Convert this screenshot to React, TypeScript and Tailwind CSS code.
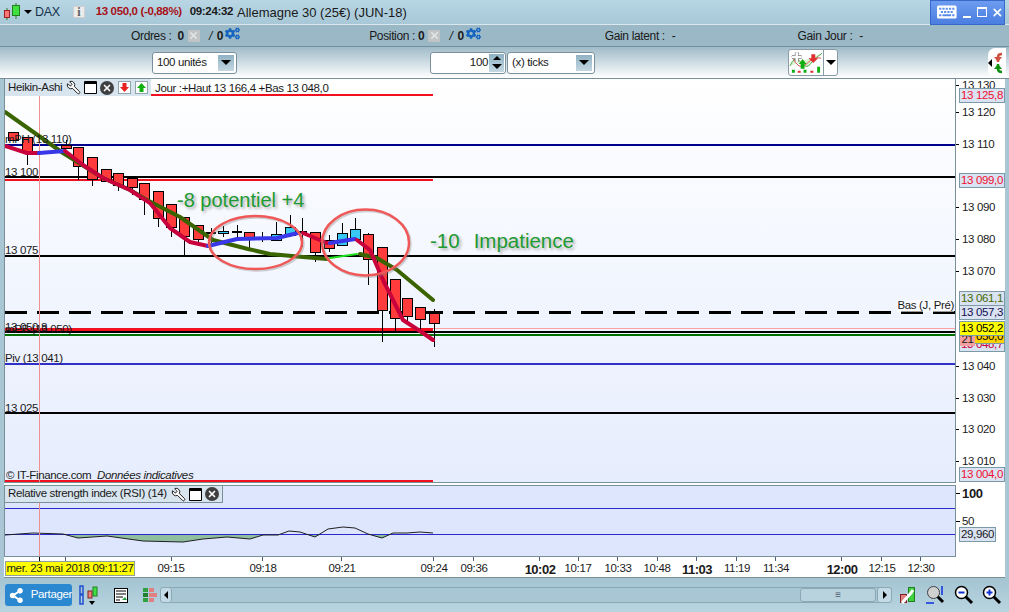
import React from 'react';
import { FaCogs, FaKeyboard, FaShareAlt } from 'react-icons/fa';
import { Wrench, X } from 'lucide-react';

// [x, bodyTop, bodyBottom, wickTop, wickBottom, colour] in page pixels
type Candle = [number, number, number, number, number, 'r' | 'b' | 'd'];

const candles: Candle[] = [
  [8, 132, 140, 132, 140, 'r'],
  [22, 137, 151, 137, 165, 'r'],
  [61, 145, 148, 140, 148, 'r'],
  [73, 147, 166, 147, 180, 'r'],
  [87, 157, 179, 157, 186, 'r'],
  [101, 169, 181, 169, 181, 'r'],
  [113, 173, 185, 173, 191, 'r'],
  [127, 178, 187, 178, 195, 'r'],
  [139, 183, 199, 183, 215, 'r'],
  [153, 191, 218, 191, 227, 'r'],
  [166, 204, 227, 204, 237, 'r'],
  [179, 217, 236, 217, 255, 'r'],
  [193, 225, 239, 225, 246, 'r'],
  [206, 232, 232, 228, 244, 'd'],
  [218, 231, 233, 226, 237, 'b'],
  [232, 231, 231, 225, 237, 'd'],
  [244, 232, 239, 232, 248, 'r'],
  [257, 237, 237, 232, 242, 'd'],
  [271, 234, 240, 222, 240, 'b'],
  [285, 227, 235, 215, 237, 'b'],
  [297, 231, 231, 218, 247, 'd'],
  [310, 232, 252, 232, 262, 'r'],
  [324, 240, 248, 235, 252, 'r'],
  [337, 233, 245, 223, 245, 'b'],
  [350, 229, 239, 218, 239, 'b'],
  [363, 234, 259, 233, 285, 'r'],
  [377, 247, 310, 247, 342, 'r'],
  [390, 279, 318, 279, 333, 'r'],
  [402, 298, 316, 298, 325, 'r'],
  [415, 307, 319, 307, 330, 'r'],
  [429, 313, 323, 309, 347, 'r'],
];

const axisTicks = [
  ['13 130', 86], ['13 120', 113], ['13 110', 145], ['13 090', 208], ['13 080', 240],
  ['13 070', 272], ['13 040', 367], ['13 030', 399], ['13 020', 430], ['13 010', 462],
] as const;

const axisTags = [
  { text: '13 125,8', y: 95, cls: 'bg-[#dbe2f2] text-[#f01030]' },
  { text: '13 099,0', y: 180, cls: 'bg-[#dbe2f2] text-[#f01030]' },
  { text: '13 061,1', y: 298, cls: 'bg-[#dbe2f2] text-[#3f6a00]' },
  { text: '13 057,3', y: 312, cls: 'bg-[#dbe2f2] text-[#101050]' },
  { text: '13 048,7', y: 344, cls: 'bg-[#dbe2f2] text-[#c8003c]' },
  { text: '13 050,0', y: 336, cls: 'bg-[#ffd000] text-black' },
  { text: '13 004,0', y: 474, cls: 'bg-[#dbe2f2] text-[#f01030]' },
];

const timeLabels = [
  ['09:15', 171, false], ['09:18', 263, false], ['09:21', 342, false], ['09:24', 434, false], ['09:36', 474, false],
  ['10:02', 540, true], ['10:17', 578, false], ['10:33', 618, false], ['10:48', 657, false], ['11:03', 697, true],
  ['11:19', 737, false], ['11:34', 776, false], ['12:00', 842, true], ['12:15', 882, false], ['12:30', 921, false],
] as const;

const timeTicks = [65, 171, 262, 341, 433, 473, 539, 578, 617, 657, 696, 736, 775, 841, 881, 920];

function CandleIcon() {
  return (
    <svg width="18" height="20" viewBox="0 0 18 20">
      <path d="M4 6v12M13 1v16" stroke="#2c7a2c" />
      <rect x="1.5" y="8.5" width="5" height="7" fill="#f87878" stroke="#a02020" />
      <rect x="9.5" y="3.5" width="7" height="10" fill="#40e040" stroke="#208020" />
    </svg>
  );
}

function Caret({ size = 'big' }: { size?: 'big' | 'small' }) {
  return size === 'big' ? (
    <span className="block h-0 w-0 border-x-[5px] border-t-[5px] border-x-transparent border-t-black" />
  ) : (
    <span className="block h-0 w-0 border-x-[4px] border-b-[4px] border-x-transparent border-b-black" />
  );
}

function DropBtn() {
  return (
    <span className="flex h-[16px] w-[16px] items-center justify-center bg-gradient-to-b from-[#8fb2c4] to-[#c4d8e2]">
      <Caret />
    </span>
  );
}

function XBox() {
  return (
    <span className="flex h-[12px] w-[12px] items-center justify-center bg-[#c0c4c4]">
      <X size={11} strokeWidth={3.5} className="text-[#e4e4e4]" />
    </span>
  );
}

function PaneIcons() {
  return (
    <>
      <Wrench size={15} className="-scale-x-100 fill-white text-black" strokeWidth={1.4} />
      <span className="h-[13px] w-[13px] rounded-[1px] border border-black border-t-[3px] bg-white" />
      <span className="flex h-[14px] w-[14px] items-center justify-center rounded-full bg-[#404040]">
        <X size={10} strokeWidth={4} className="text-white" />
      </span>
    </>
  );
}

function ArrowBox({ up }: { up?: boolean }) {
  return (
    <svg width="13" height="13" viewBox="0 0 13 13" className="ml-[1px]">
      <rect x="0.5" y="0.5" width="12" height="12" fill="white" stroke="#90a4ae" />
      {up ? <path d="M6.5 2l4.5 5H8.5v4h-4V7H2z" fill="#10b010" /> : <path d="M4.5 2h4v4H11l-4.5 5L2 6h2.5z" fill="#e82020" />}
    </svg>
  );
}

function ZoomIcon({ sign }: { sign: '+' | '-' }) {
  return (
    <svg width="20" height="20" viewBox="0 0 20 20">
      <path d="M11 11l7 7" stroke="black" strokeWidth="3" />
      <circle cx="7.5" cy="7.5" r="6" fill="white" stroke="black" strokeWidth="1.5" />
      <path d="M4.5 7.5h6" stroke="#1030d0" strokeWidth="2" />
      {sign === '+' && <path d="M7.5 4.5v6" stroke="#1030d0" strokeWidth="2" />}
    </svg>
  );
}

function TradeCount({ label, left, gap }: { label: string; left: string; gap: string }) {
  return (
    <div className={`flex items-center ${left}`}>
      <span>{label}</span>
      <b className={gap}>0</b>
      <span className="ml-[4px]"><XBox /></span>
      <span className="ml-[9px] italic">/</span>
      <b className="ml-[5px]">0</b>
      <FaCogs size={15} className="ml-[2px] -mt-1 text-[#1565c0]" />
    </div>
  );
}

function PriceChart() {
  return (
    <svg className="absolute inset-0 h-full w-full" viewBox="5 79 950 403">
      <g shapeRendering="crispEdges">
        <path d="M151 95H433" stroke="#f01020" strokeWidth="2" />
        <path d="M5 145H955" stroke="#000090" strokeWidth="2" />
        <path d="M5 177H955" stroke="black" strokeWidth="2" />
        <path d="M5 180H433" stroke="#f01020" strokeWidth="2" />
        <path d="M5 256H955" stroke="black" strokeWidth="2" />
        <path d="M5 312H955" stroke="black" strokeWidth="3" strokeDasharray="22 10" />
        <path d="M433 328H955" stroke="#ffa0a0" strokeWidth="1" />
        <path d="M5 329.5H433" stroke="#f01020" strokeWidth="3" />
        <path d="M5 332H955" stroke="black" strokeWidth="2" />
        <path d="M5 335H955" stroke="#007000" strokeWidth="2" />
        <path d="M5 364H955" stroke="#3030c8" strokeWidth="2" />
        <path d="M5 413H955" stroke="black" strokeWidth="2" />
        <path d="M5 481H433" stroke="#f01020" strokeWidth="2" />
        <path d="M39 79V482" stroke="#f09090" strokeWidth="1" />
      </g>
      <g shapeRendering="crispEdges">
        {candles.map(([x, top, bottom, wTop, wBottom, kind]) => (
          <g key={x}>
            <path d={`M${x + 5}.5 ${wTop}V${wBottom}`} stroke="black" />
            {kind === 'd' ? (
              <path d={`M${x} ${top}.5H${x + 10}`} stroke="black" strokeWidth="2" />
            ) : (
              <rect x={x + 0.5} y={top + 0.5} width="10" height={bottom - top} fill={kind === 'r' ? '#ff3b3b' : '#38c8f4'} stroke="black" />
            )}
          </g>
        ))}
      </g>
      <g fill="none" strokeLinejoin="round" strokeLinecap="round">
        <path d="M5 112L63 153L103 178L130 190L147 200L180 217L213 240L248 249L270 254L303 257L327 259" stroke="#3a6400" strokeWidth="4" />
        <path d="M330 258L357 254" stroke="#20e020" strokeWidth="2" />
        <path d="M360 254L377 258L397 270L433 300" stroke="#3a6400" strokeWidth="4" />
        <path d="M5 146L27 153L39 153" stroke="#c8003c" strokeWidth="4" />
        <path d="M39 153L65 151" stroke="#3838e8" strokeWidth="4" />
        <path d="M65 151L83 165L103 178L130 190L150 203L170 228L190 242L208 246" stroke="#c8003c" strokeWidth="4" />
        <path d="M208 246L237 239L277 238L298 233" stroke="#3838e8" strokeWidth="4" />
        <path d="M303 233L327 243" stroke="#c8003c" strokeWidth="4" />
        <path d="M330 243L355 239" stroke="#3838e8" strokeWidth="4" />
        <path d="M357 240L370 250L383 280L403 320L423 333L433 340" stroke="#c8003c" strokeWidth="4" />
      </g>
      <g fill="none">
        <ellipse cx="257" cy="244" rx="46.5" ry="26.5" stroke="#808080" strokeOpacity="0.35" strokeWidth="2.5" />
        <ellipse cx="367" cy="244" rx="43.5" ry="33" stroke="#808080" strokeOpacity="0.35" strokeWidth="2.5" />
        <ellipse cx="255.5" cy="242.5" rx="46.5" ry="26.5" stroke="#f05858" strokeWidth="2.5" />
        <ellipse cx="365.5" cy="242.5" rx="43.5" ry="33" stroke="#f05858" strokeWidth="2.5" />
      </g>
    </svg>
  );
}

function RsiChart() {
  const line = 'M5 535L33 533L63 534L78 538L107 536L143 541L183 542L203 539L227 537L250 539L263 535L278 535L289 531L300 532L315 537L328 529L343 527L355 528L368 534L382 538L393 533L407 533L420 532L433 533';
  return (
    <svg className="absolute inset-0 h-full w-full" viewBox="5 486 950 70">
      <path d="M63 534L78 538L107 536L143 541L183 542L203 539L227 537L250 539L263 535V534Z" fill="#8fbf9f" />
      <path d="M306 534L315 537L322 534ZM368 534L382 538L391 534Z" fill="#8fbf9f" />
      <path d="M5 508H955M5 534H955" stroke="#2a2ad0" strokeWidth="1" shapeRendering="crispEdges" />
      <path d={line} fill="none" stroke="#202020" strokeWidth="1" />
      <path d="M39 486V556" stroke="#f09090" shapeRendering="crispEdges" />
    </svg>
  );
}

export default function App() {
  return (
    <div className="flex h-[612px] w-[1009px] flex-col overflow-hidden whitespace-nowrap bg-[#a8c6d4] font-['Liberation_Sans',sans-serif] text-[11.5px] leading-none tracking-[-0.35px] text-[#1a1a1a]">
      {/* Title bar */}
      <div className="flex h-[25px] shrink-0 items-center border-b border-[#dbe8ee] bg-gradient-to-b from-[#b8d6e4] to-[#a8c8d8] pl-[3px]">
        <CandleIcon />
        <span className="ml-[3px] block h-0 w-0 border-x-[4px] border-t-[4px] border-x-transparent border-t-black" />
        <span className="ml-[3px] text-[12.5px] text-[#16324a]">DAX</span>
        <span className="ml-[13px] flex h-[12px] w-[12px] items-center justify-center border border-[#d0d0d0] bg-[#ececec] font-['Liberation_Serif',serif] text-[12px] font-bold text-[#606060]">i</span>
        <span className="ml-[11px] font-bold text-[#a81018]">13 050,0 (-0,88%)</span>
        <span className="ml-[8px] font-bold">09:24:32</span>
        <span className="ml-[4px] text-[13px] tracking-normal">Allemagne 30 (25€) (JUN-18)</span>
        <div className="ml-auto mr-[4px] flex h-[25px] w-[75px] items-center border border-[#3868c8] bg-gradient-to-b from-[#6c9cf0] to-[#4a7ee0] pl-[6px] text-white">
          <FaKeyboard size={20} />
          <span className="ml-[6px] mt-[9px] h-[2px] w-[9px] bg-white" />
          <span className="ml-[6px] h-[10px] w-[10px] border border-t-2 border-white" />
          <X size={13} strokeWidth={3} className="ml-[4px]" />
        </div>
      </div>

      {/* Orders bar */}
      <div className="flex h-[22px] shrink-0 items-center border-b border-[#74909e] bg-[#9ab8c6] text-[12px]">
        <TradeCount label="Ordres :" left="ml-[131px]" gap="ml-[6px]" />
        <TradeCount label="Position :" left="ml-[129px]" gap="ml-[3px]" />
        <span className="ml-[124px]">Gain latent :</span>
        <span className="ml-[7px]">-</span>
        <span className="ml-[122px]">Gain Jour :</span>
        <span className="ml-[7px]">-</span>
      </div>

      {/* Order toolbar */}
      <div className="flex h-[32px] shrink-0 items-center border-b border-[#7a9098] bg-gradient-to-b from-[#9fbbc8] to-white">
        <div className="ml-[152px] flex h-[22px] w-[85px] items-center justify-between rounded-[3px] border border-[#7a909c] bg-white pl-[4px] pr-[2px]">
          100 unités <DropBtn />
        </div>
        <div className="ml-[193px] flex h-[22px] w-[76px] items-center justify-end rounded-[3px] border border-[#7a909c] bg-white pr-[1px]">
          100
          <span className="ml-[1px] flex h-[18px] w-[15px] flex-col items-center justify-around bg-gradient-to-b from-[#8fb2c4] to-[#c4d8e2]">
            <Caret size="small" />
            <Caret />
          </span>
        </div>
        <div className="ml-[1px] flex h-[22px] w-[88px] items-center justify-between rounded-[3px] border border-[#7a909c] bg-white pl-[4px] pr-[2px]">
          (x) ticks <DropBtn />
        </div>
        <div className="ml-[193px] flex h-[27px] items-center rounded-[3px] border border-[#8a9ca6] bg-white">
          <svg width="35" height="25" viewBox="0 0 35 25" className="border-r border-[#8a9ca6]">
            <path d="M1 16Q6 4 12 12T22 14T34 3" fill="#b8e8a8" fillOpacity="0.5" stroke="#40a840" />
            <path d="M3 6Q10 22 18 14T33 8" fill="none" stroke="#e05050" />
            <path d="M3 7h10M8 2v10" stroke="#808080" strokeWidth="4" />
            <path d="M3 7h10M8 2v10" stroke="white" strokeWidth="2.5" />
            <path d="M14 9l4 5h-2v5h-4v-5h-2z" fill="#10b010" />
            <path d="M23 4h4v4h3l-5 5-5-5h3z" fill="#e03030" />
            <path d="M3 20h3v3H3zM15 20h3v3h-3zM29 17h3v6h-3z" fill="#10b010" />
            <path d="M9 21h3v2H9zM22 21h3v2h-3z" fill="#e03030" />
          </svg>
          <span className="flex w-[13px] justify-center"><Caret /></span>
        </div>
        <div className="ml-[150px] flex h-[29px] w-[18px] items-center rounded-l-[7px] bg-white">
          <span className="block h-0 w-0 border-y-[4px] border-r-[4px] border-y-transparent border-r-black" />
          <svg width="12" height="22" viewBox="0 0 12 22">
            <path d="M6 10V5Q6 2 10 2" stroke="#d05040" strokeWidth="2.5" fill="none" />
            <path d="M2 5l4 5 4-5z" fill="#d05040" />
            <path d="M6 12v5q0 3 4 3" stroke="#109010" strokeWidth="2.5" fill="none" />
            <path d="M2 17l4-5 4 5z" fill="#109010" />
          </svg>
        </div>
      </div>

      {/* Charts and time axis */}
      <div className="ml-[4px] mr-[4px] flex min-h-0 flex-1 flex-col bg-white">
        <div className="flex h-[404px] shrink-0">
          <div className="relative w-[952px] shrink-0 overflow-hidden border-x border-b border-[#7a9098] bg-gradient-to-b from-white to-[#e6edfd]">
            <PriceChart />
            <div className="absolute left-0 top-0 flex h-[17px] w-[146px] items-center gap-[3px] bg-[#d8e4ee] pl-[3px]">
              <span className="mr-[1px]">Heikin-Ashi</span>
              <PaneIcons />
              <ArrowBox />
              <ArrowBox up />
            </div>
            <span className="absolute left-[150px] top-[4px]">Jour :+Haut 13 166,4 +Bas 13 048,0</span>
            <span className="absolute left-0 top-[55px]">mPH (13 110)</span>
            <span className="absolute left-0 top-[88px]">13 100</span>
            <span className="absolute left-0 top-[166px]">13 075</span>
            <span className="absolute left-0 top-[243px]">13 050,8</span>
            <span className="absolute left-0 top-[245px]">mPB (13 050)</span>
            <span className="absolute left-0 top-[274px]">Piv (13 041)</span>
            <span className="absolute left-0 top-[324px]">13 025</span>
            <span className="absolute left-[1px] top-[391px]">© IT-Finance.com&nbsp; <i>Données indicatives</i></span>
            <span className="absolute right-[1px] top-[221px] bg-white/60">Bas (J, Pré)</span>
            <span className="absolute left-[172px] top-[111px] text-[20px] tracking-normal text-[#1e9a32] [text-shadow:2px_2px_3px_#aaaaaa]">-8 potentiel +4</span>
            <span className="absolute left-[425px] top-[152px] text-[20.5px] tracking-normal text-[#1e9a32] [text-shadow:2px_2px_3px_#aaaaaa]">
              -10<span className="ml-[14px]">Impatience</span>
            </span>
          </div>

          {/* Price axis */}
          <div className="relative flex-1 overflow-hidden">
            {axisTicks.map(([text, y]) => (
              <div key={text} className="absolute left-0 flex items-center gap-[3px]" style={{ top: y - 79 - 6 }}>
                <span className="h-px w-[3px] bg-black" />
                <span>{text}</span>
              </div>
            ))}
            {axisTags.map(({ text, y, cls }) => (
              <div key={text} className={`absolute left-[3px] flex h-[15px] w-[46px] items-center justify-center border border-[#7a9aa8] ${cls}`} style={{ top: y - 79 - 7 }}>
                {text}
              </div>
            ))}
            <div className="absolute left-[4px] top-[255px] flex h-[12px] w-[15px] items-center justify-center bg-[#f4a0a0]">21</div>
            <div className="absolute left-[3px] top-[242px] flex h-[15px] w-[46px] items-center justify-center border border-[#7a9aa8] bg-[#ffff00] text-black">13 052,2</div>
          </div>
        </div>

        {/* RSI pane */}
        <div className="mt-[2px] flex h-[72px] shrink-0">
          <div className="relative w-[952px] shrink-0 overflow-hidden border border-[#7a9098] bg-[#dde6fd]">
            <RsiChart />
            <div className="absolute left-0 top-0 flex h-[17px] w-[218px] items-center gap-[3px] border-b border-r border-[#7a9098] bg-[#d8e4ee] pl-[3px]">
              <span className="mr-[1px]">Relative strength index (RSI) (14)</span>
              <PaneIcons />
            </div>
          </div>
          <div className="relative flex-1 overflow-hidden">
            <div className="absolute left-0 top-[2px] flex items-center gap-[2px] text-[13px] font-bold">
              <span className="h-px w-[4px] bg-black" />100
            </div>
            <div className="absolute left-0 top-[31px] flex items-center gap-[2px]">
              <span className="h-px w-[4px] bg-black" />50
            </div>
            <div className="absolute left-[3px] top-[42px] flex h-[15px] w-[37px] items-center justify-center border border-[#7a9aa8] bg-[#dbe2f2]">29,960</div>
          </div>
        </div>

        {/* Time axis */}
        <div className="relative h-[21px] shrink-0 border-b border-[#7a9098]">
          <span className="absolute left-[35px] top-0 h-[4px] w-px bg-black" />
          {timeTicks.map((x) => (
            <span key={x} className="absolute top-0 h-[4px] w-px bg-[#506070]" style={{ left: x - 4 }} />
          ))}
          {timeLabels.map(([text, x, bold]) => (
            <span key={text} className={`absolute top-[6px] -translate-x-1/2 ${bold ? 'text-[13px] font-bold tracking-[-0.5px]' : ''}`} style={{ left: x - 4 }}>
              {text}
            </span>
          ))}
          <span className="absolute left-[1px] top-[4px] flex h-[15px] w-[130px] items-center justify-center border border-[#90a0a0] bg-[#ffff00]">mer. 23 mai 2018 09:11:27</span>
        </div>
      </div>

      {/* Bottom toolbar */}
      <div className="flex h-[34px] shrink-0 items-center bg-gradient-to-b from-[#a4c4d2] to-[#b8d4e0] pl-[5px]">
        <div className="flex h-[22px] w-[67px] items-center gap-[7px] rounded-[3px] bg-[#2a88d0] pl-[4px] text-white">
          <FaShareAlt size={15} />
          Partager
        </div>
        <svg width="22" height="22" viewBox="0 0 22 22" className="ml-[5px]">
          <path d="M3 2h3v8H3zM3 11h3v9H3z" fill="none" stroke="#2050d0" strokeWidth="1.5" />
          <rect x="11" y="7" width="4" height="7" fill="#f08080" stroke="#802020" />
          <rect x="16" y="3" width="4" height="9" fill="#40e040" stroke="#208020" />
          <path d="M12 17h6l-3 4z" fill="black" />
        </svg>
        <svg width="14" height="15" viewBox="0 0 14 15" className="ml-[15px]">
          <rect x="0.5" y="0.5" width="13" height="14" fill="white" stroke="black" />
          <path d="M2 3h10M2 6h10M2 9h7M2 12h4" stroke="black" />
          <path d="M8 12l3-3 2 3z" fill="#20a040" />
        </svg>
        <svg width="16" height="16" viewBox="0 0 16 16" className="ml-[14px]">
          <path d="M1 1h5v4H1zM1 11h5v4H1z" fill="#30a040" />
          <path d="M7 1h5v4H7zM7 6h8v4H7zM7 11h5v4H7z" fill="#e08080" />
          <path d="M1 6h5v4H1z" fill="#208030" />
        </svg>
        {/* Scrollbar */}
        <div className="ml-[2px] flex h-[16px] w-[732px] items-center rounded-[3px] border border-[#8aa8b6] bg-[#a8c6d4]">
          <span className="flex h-full w-[11px] items-center justify-center rounded-[3px] border-r border-[#8aa8b6] bg-[#c4dae4]">
            <span className="block h-0 w-0 border-y-[4px] border-r-[4px] border-y-transparent border-r-black" />
          </span>
          <span className="ml-auto flex h-full w-[76px] items-center justify-center rounded-[3px] border border-[#8aa8b6] bg-[#b8d2de] text-[10px] text-[#506070]">≡</span>
          <span className="ml-[1px] flex h-full w-[14px] items-center justify-center rounded-[3px] border-l border-[#8aa8b6] bg-[#c4dae4]">
            <span className="block h-0 w-0 border-y-[4px] border-l-[4px] border-y-transparent border-l-black" />
          </span>
        </div>
        <svg width="16" height="20" viewBox="0 0 16 20" className="ml-[8px]">
          <rect x="0.5" y="9.5" width="6" height="8" fill="#e08080" stroke="#802020" />
          <rect x="8.5" y="2.5" width="6" height="14" fill="#40d040" stroke="#208020" />
          <path d="M2 18L11 8M11 8l2-3" stroke="white" strokeWidth="3" />
        </svg>
        <svg width="20" height="20" viewBox="0 0 20 20" className="ml-[10px]">
          <path d="M10 10l7 7" stroke="black" strokeWidth="3" />
          <circle cx="7.5" cy="7.5" r="6" fill="#d0d0d0" stroke="#404040" />
          <path d="M16 1v9M0 18h8" stroke="#1030e0" strokeWidth="1.5" />
        </svg>
        <span className="ml-[8px]"><ZoomIcon sign="-" /></span>
        <span className="ml-[8px]"><ZoomIcon sign="+" /></span>
      </div>
    </div>
  );
}
